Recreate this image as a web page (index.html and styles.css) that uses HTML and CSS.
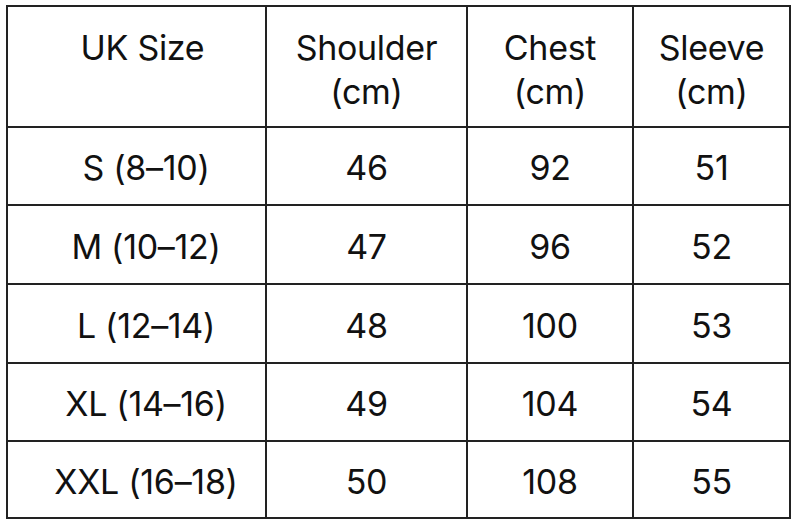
FILE: index.html
```html
<!DOCTYPE html>
<html lang="en">
<head>
<meta charset="utf-8">
<title>UK Size Chart</title>
<link rel="stylesheet" href="styles.css">
</head>
<body>
<div class="page">
  <div class="chart">
    <div class="cell head first">UK Size</div>
    <div class="cell head">Shoulder<br>(cm)</div>
    <div class="cell head">Chest<br>(cm)</div>
    <div class="cell head">Sleeve<br>(cm)</div>

    <div class="cell first">S (8–10)</div>
    <div class="cell">46</div>
    <div class="cell">92</div>
    <div class="cell">51</div>

    <div class="cell first">M (10–12)</div>
    <div class="cell">47</div>
    <div class="cell">96</div>
    <div class="cell">52</div>

    <div class="cell first">L (12–14)</div>
    <div class="cell">48</div>
    <div class="cell">100</div>
    <div class="cell">53</div>

    <div class="cell first">XL (14–16)</div>
    <div class="cell">49</div>
    <div class="cell">104</div>
    <div class="cell">54</div>

    <div class="cell first">XXL (16–18)</div>
    <div class="cell">50</div>
    <div class="cell">108</div>
    <div class="cell">55</div>
  </div>
</div>
</body>
</html>
```

FILE: styles.css
```css
html, body {
  margin: 0;
  padding: 0;
  background: #ffffff;
}

.page {
  padding: 5px 0 0 6px;
  font-family: Inter, "Liberation Sans", Arial, sans-serif;
  color: #111111;
}

.chart {
  display: grid;
  grid-template-columns: 257px 199px 164px 155px;
  grid-template-rows: 119px 76px 77px 77px 76px 75px;
  gap: 2px;
  width: 781px;
  background: #222222;
  border: 2px solid #222222;
}

.cell {
  background: #ffffff;
  display: flex;
  align-items: center;
  justify-content: center;
  text-align: center;
  font-size: 34px;
  letter-spacing: -0.3px;
  line-height: 44px;
  padding-top: 4px;
  box-sizing: border-box;
}

.cell.first {
  padding-left: 19px;
}

.cell.head {
  align-items: flex-start;
  padding-top: 19px;
}

.cell.head.first {
  padding-left: 12px;
}
```
